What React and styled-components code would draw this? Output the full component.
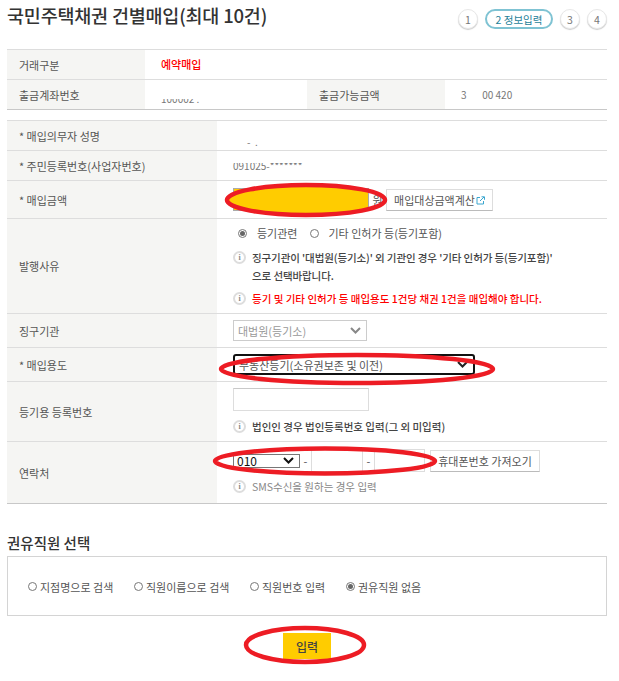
import React from 'react';
import styled, { createGlobalStyle } from 'styled-components';

const Global = createGlobalStyle`
  html, body { margin: 0; background: #fff; }
  body { font-family: "Noto Sans CJK KR", "Liberation Sans", sans-serif; font-size: 11px; color: #555; }
  * { box-sizing: border-box; }
`;
const Page = styled.div`position: relative; width: 619px; height: 681px; padding: 0 12px 0 7px; overflow: hidden;`;
const Header = styled.header`display: flex; justify-content: space-between; height: 49px; align-items: flex-start;`;
const Title = styled.h1`margin: 2px 0 0; font-size: 18.5px; line-height: 26px; font-weight: 500; color: #333; letter-spacing: -0.2px;`;
const Steps = styled.ol`display: flex; gap: 7px; margin: 9px 0 0; padding: 0; list-style: none;`;
const Step = styled.li`
  height: 20px; width: ${p => p.$active ? '68px' : '20px'};
  display: flex; align-items: center; justify-content: center; white-space: nowrap;
  border-radius: 10px; background: #fff; font-size: 10.5px;
  color: ${p => p.$active ? '#1f7f99' : '#777'};
  border: ${p => p.$active ? '2px solid #7fc3d3' : '1px solid #e8e8e8'};
  box-shadow: ${p => p.$active ? 'none' : '0 1px 1px #ccc'};
`;
const Table = styled.section`
  border-top: 1px solid #ddd; border-bottom: 1px solid #c8c8c8;
  margin-bottom: ${p => p.$mb || 0}px;
`;
const Row = styled.div`
  display: flex; height: ${p => p.$h}px;
  & + & { border-top: 1px solid #ddd; }
`;
const Label = styled.div`
  width: ${p => p.$w}px; flex: none; background: #f5f5f3; display: flex; align-items: center;
  padding-left: 12px; color: #555; font-size: 11px; white-space: nowrap;
`;
const Value = styled.div`
  flex: ${p => p.$w ? 'none' : 1}; width: ${p => p.$w ? p.$w + 'px' : 'auto'};
  display: flex; flex-direction: column; justify-content: ${p => p.$top ? 'flex-start' : 'center'};
  padding: ${p => p.$pt || 0}px 0 0 ${p => p.$pl || 16}px; min-width: 0; color: #555;
`;
const Red = styled.span`color: #f00; font-weight: 500; margin-top: -1px;`;
/* Redacted figures: the text stays whole, a white strip hides part of it. */
const Masked = styled.span`
  position: relative; display: block; line-height: 12px; font-size: 10px;
  margin-top: ${p => p.$mt || 0}px; padding-left: ${p => p.$pl || 0}px; white-space: pre; color: #777;
  &::after {
    content: ""; position: absolute; left: 0; right: 0; top: 0; height: ${p => p.$cover}px; background: #fff;
  }
`;
const Inline = styled.div`display: flex; align-items: center; margin-top: ${p => p.$mt || 0}px;`;
const TextInput = styled.div`
  width: 136px; height: 23px; border: 1px solid #ddd; border-top-color: #c9c9c9; background: #fff; flex: none;
`;
const YellowInput = styled(TextInput)`background: #fc0; margin-top: -2px; border-color: #aaa;`;
const Won = styled.span`width: 17px; text-align: center; flex: none;`;
const Btn = styled.button`
  height: 22px; padding: 0; width: ${p => p.$w}px; margin-left: ${p => p.$ml || 0}px; background: #fff;
  border: 1px solid #ddd; border-bottom-color: #bbb; font: inherit; font-size: 11px; color: #555;
  display: flex; align-items: center; justify-content: center; gap: 1px; white-space: nowrap;
`;
const RadioLine = styled.div`display: flex; align-items: center; font-size: 11px; color: #555; height: 14px;`;
const Radio = styled.span`
  width: 9px; height: 9px; border-radius: 50%; border: 1px solid #777; background: #fff; flex: none;
  margin-left: ${p => p.$ml}px; margin-right: ${p => p.$mr}px; display: flex; align-items: center; justify-content: center;
  &::after { content: ""; width: 5px; height: 5px; border-radius: 50%; background: ${p => p.$on ? '#666' : 'transparent'}; }
`;
const Note = styled.div`
  display: flex; gap: 6px; font-size: 10.5px; line-height: 18px; font-weight: ${p => p.$muted ? 400 : 500};
  color: ${p => p.$red ? '#f00' : p.$muted ? '#888' : '#444'}; margin-top: ${p => p.$mt || 0}px;
  letter-spacing: ${p => p.$ls || 0}px;
`;
const NoteIcon = styled.span`
  width: 13px; height: 13px; flex: none; margin-top: 2px; border-radius: 50%; border: 2px solid #ddd; background: #fff;
  font: 700 8px/9px "Liberation Serif", serif; color: #888; text-align: center;
`;
const SelectBox = styled.div`
  width: ${p => p.$w}px; height: ${p => p.$h}px; flex: none; display: flex; align-items: center; justify-content: space-between;
  padding: 0 5px 0 ${p => p.$pl || 4}px; background: #fff; white-space: nowrap; font-size: ${p => p.$fs || 11}px;
  border: ${p => p.$b}; border-radius: ${p => p.$r || 0}px; color: ${p => p.$c};
`;
const Dash = styled.span`width: 11px; flex: none; text-align: center; color: #555;`;
const PhoneInput = styled.div`width: ${p => p.$w}px; height: 23px; border: 1px solid #ddd; background: #fff; flex: none;`;
const SectionTitle = styled.h2`margin: 30px 0 4px; font-size: 14.5px; line-height: 18px; font-weight: 500; color: #333;`;
const Box = styled.div`
  height: 60px; border: 1px solid #d4d4d4; display: flex; align-items: center; padding-top: 1px; font-size: 11px; color: #555;
`;
const BoxRadio = styled.label`display: flex; align-items: center; gap: 3px; width: ${p => p.$w}px; flex: none; white-space: nowrap;`;
const Actions = styled.div`display: flex; justify-content: center; margin-top: 17px;`;
const Submit = styled.button`
  width: 48px; height: 26px; border: 0; background: #fc0; color: #444; font: inherit; font-size: 12px; font-weight: 500; padding: 0;
`;
const Scribbles = styled.svg`position: absolute; left: 0; top: 0; width: 619px; height: 681px; pointer-events: none;`;

const Chevron = ({ color = '#888', w = 2 }) => (
  <svg width="11" height="7" viewBox="0 0 11 7" fill="none"><path d="M1 1l4.5 4.5L10 1" stroke={color} strokeWidth={w} /></svg>
);
const ExtIcon = () => (
  <svg width="9" height="9" viewBox="0 0 9 9" fill="none" stroke="#3aa6cf" strokeWidth="1"><path d="M4 1.5H1v6.5h6.5V5M4 5l4-4M5.5 .8h3v3" /></svg>
);
const Info = () => <NoteIcon>i</NoteIcon>;

export default function App() {
  return (
    <Page>
      <Global />
      <Header>
        <Title>국민주택채권 건별매입(최대 10건)</Title>
        <Steps>
          <Step>1</Step>
          <Step $active>2 정보입력</Step>
          <Step>3</Step>
          <Step>4</Step>
        </Steps>
      </Header>
      <Table $mb={10}>
        <Row $h={29}>
          <Label $w={138}>거래구분</Label>
          <Value><Red>예약매입</Red></Value>
        </Row>
        <Row $h={30}>
          <Label $w={138}>출금계좌번호</Label>
          <Value $w={162}><Masked $mt={8} $cover={6}>100002 .</Masked></Value>
          <Label $w={138}>출금가능금액</Label>
          <Value><Masked>3       00 420</Masked></Value>
        </Row>
      </Table>
      <Table>
        <Row $h={29}>
          <Label $w={210}>* 매입의무자 성명</Label>
          <Value><Masked $pl={14} $mt={12} $cover={6}>-  .</Masked></Value>
        </Row>
        <Row $h={30}>
          <Label $w={210}>* 주민등록번호(사업자번호)</Label>
          <Value><Masked $cover={3}>091025-*******</Masked></Value>
        </Row>
        <Row $h={38}>
          <Label $w={210}>* 매입금액</Label>
          <Value>
            <Inline $mt={1}>
              <YellowInput />
              <Won>원</Won>
              <Btn $w={107}>매입대상금액계산<ExtIcon /></Btn>
            </Inline>
          </Value>
        </Row>
        <Row $h={95}>
          <Label $w={210}>발행사유</Label>
          <Value $top $pt={7}>
            <RadioLine>
              <Radio $on $ml={5} $mr={10} />등기관련
              <Radio $ml={13} $mr={9} />기타 인허가 등(등기포함)
            </RadioLine>
            <Note $mt={9} $ls={-0.1}><Info /><span>징구기관이 '대법원(등기소)' 외 기관인 경우 '기타 인허가 등(등기포함)'<br />으로 선택바랍니다.</span></Note>
            <Note $red $mt={5}><Info /><span>등기 및 기타 인허가 등 매입용도 1건당 채권 1건을 매입해야 합니다.</span></Note>
          </Value>
        </Row>
        <Row $h={34}>
          <Label $w={210}>징구기관</Label>
          <Value>
            <SelectBox $w={134} $h={21} $b="1px solid #ccc" $c="#999"><span>대법원(등기소)</span><Chevron /></SelectBox>
          </Value>
        </Row>
        <Row $h={34}>
          <Label $w={210}>* 매입용도</Label>
          <Value>
            <SelectBox $w={242} $h={21} $b="2px solid #111" $r={3} $c="#555"><span>부동산등기(소유권보존 및 이전)</span><Chevron color="#222" /></SelectBox>
          </Value>
        </Row>
        <Row $h={60}>
          <Label $w={210}>등기용 등록번호</Label>
          <Value $top $pt={6}>
            <TextInput />
            <Note $mt={7}><Info /><span>법인인 경우 법인등록번호 입력(그 외 미입력)</span></Note>
          </Value>
        </Row>
        <Row $h={62}>
          <Label $w={210}>연락처</Label>
          <Value $top $pt={7}>
            <Inline>
              <SelectBox $w={67} $h={14} $b="1px solid #777" $c="#111" $pl={3} $fs={12}><span>010</span><Chevron color="#111" /></SelectBox>
              <Dash>-</Dash>
              <PhoneInput $w={52} />
              <Dash>-</Dash>
              <PhoneInput $w={51} />
              <Btn $w={110} $ml={5}>휴대폰번호 가져오기</Btn>
            </Inline>
            <Note $muted $mt={6}><Info /><span>SMS수신을 원하는 경우 입력</span></Note>
          </Value>
        </Row>
      </Table>
      <SectionTitle>권유직원 선택</SectionTitle>
      <Box>
        <BoxRadio $w={106}><Radio $ml={20} $mr={0} />지점명으로 검색</BoxRadio>
        <BoxRadio $w={116}><Radio $ml={20} $mr={0} />직원이름으로 검색</BoxRadio>
        <BoxRadio $w={96}><Radio $ml={20} $mr={0} />직원번호 입력</BoxRadio>
        <BoxRadio><Radio $on $ml={20} $mr={0} />권유직원 없음</BoxRadio>
      </Box>
      <Actions><Submit>입력</Submit></Actions>
      <Scribbles viewBox="0 0 619 681" fill="none">
        <defs>
          <clipPath id="yellowEnd"><rect x="220" y="180" width="147" height="40" /></clipPath>
        </defs>
        <ellipse cx="306" cy="200" rx="79" ry="15" fill="#fc0" clipPath="url(#yellowEnd)" />
        <ellipse cx="306" cy="200" rx="79" ry="15" stroke="#ed1c24" strokeWidth="4.5" />
        <ellipse cx="357" cy="369" rx="136" ry="14" stroke="#ed1c24" strokeWidth="4.5" />
        <ellipse cx="325" cy="461" rx="110" ry="12.5" stroke="#ed1c24" strokeWidth="4.5" />
        <ellipse cx="305" cy="645" rx="59" ry="17" stroke="#ed1c24" strokeWidth="4.5" />
      </Scribbles>
    </Page>
  );
}
